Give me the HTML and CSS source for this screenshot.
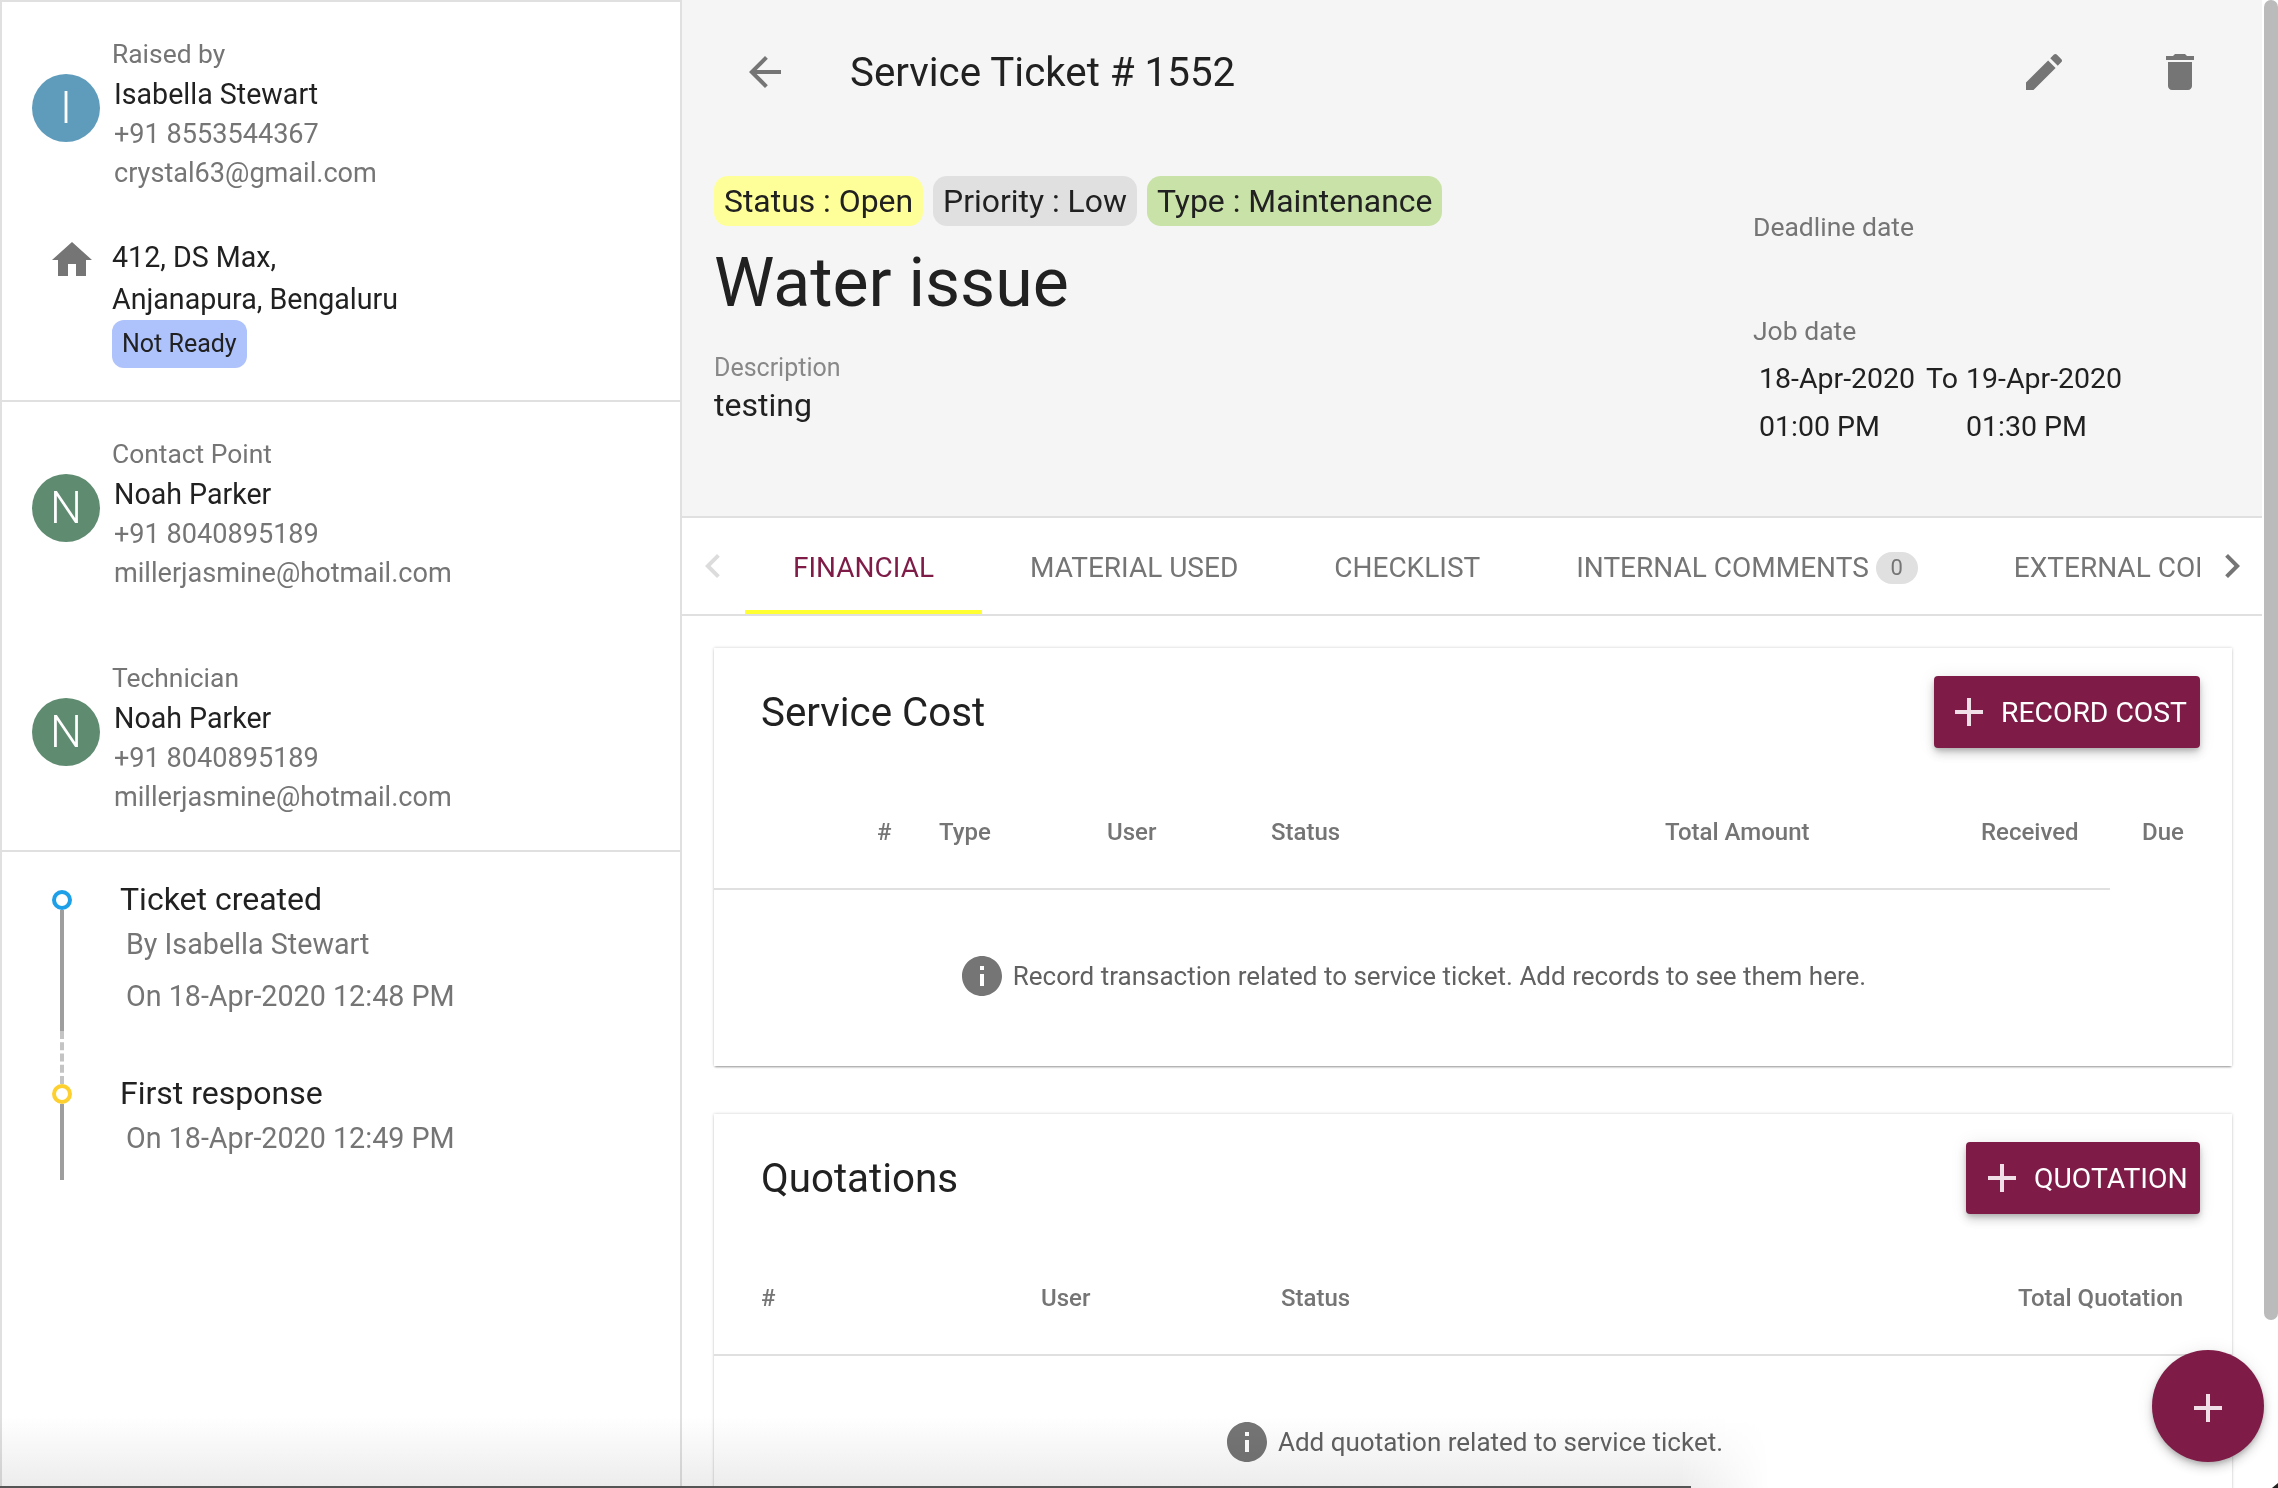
FILE: index.html
```html
<!DOCTYPE html>
<html>
<head>
  <title>Service Ticket # 1552</title>
  <link rel="stylesheet" href="styles.css">
</head>
<body>
  <div class="app">
    <aside class="side">
      <section class="side-block block-raised">
        <div class="person">
          <div class="avatar avatar-blue">I</div>
          <div class="person-info">
            <div class="label">Raised by</div>
            <div class="name">Isabella Stewart</div>
            <div class="meta">+91 8553544367</div>
            <div class="meta">crystal63@gmail.com</div>
          </div>
        </div>
        <div class="address">
          <svg class="home-icon" viewBox="0 0 24 24"><path d="M10 20v-6h4v6h5v-8h3L12 3 2 12h3v8z"/></svg>
          <div>
            <div class="address-line">412, DS Max,</div>
            <div class="address-line">Anjanapura, Bengaluru</div>
            <span class="ready-chip">Not Ready</span>
          </div>
        </div>
      </section>

      <section class="side-block block-people">
        <div class="person">
          <div class="avatar avatar-green">N</div>
          <div class="person-info">
            <div class="label">Contact Point</div>
            <div class="name">Noah Parker</div>
            <div class="meta">+91 8040895189</div>
            <div class="meta">millerjasmine@hotmail.com</div>
          </div>
        </div>
        <div class="person person-second">
          <div class="avatar avatar-green">N</div>
          <div class="person-info">
            <div class="label">Technician</div>
            <div class="name">Noah Parker</div>
            <div class="meta">+91 8040895189</div>
            <div class="meta">millerjasmine@hotmail.com</div>
          </div>
        </div>
      </section>

      <section class="timeline">
        <div class="step step-first">
          <div class="rail">
            <span class="dot dot-blue"></span>
            <span class="rail-solid rail-long"></span>
            <span class="rail-dashed"></span>
          </div>
          <div class="step-body">
            <div class="step-title">Ticket created</div>
            <div class="step-meta">By Isabella Stewart</div>
            <div class="step-meta step-date">On 18-Apr-2020 12:48 PM</div>
          </div>
        </div>
        <div class="step">
          <div class="rail">
            <span class="dot dot-yellow"></span>
            <span class="rail-solid rail-short"></span>
          </div>
          <div class="step-body">
            <div class="step-title">First response</div>
            <div class="step-meta">On 18-Apr-2020 12:49 PM</div>
          </div>
        </div>
      </section>
    </aside>

    <main class="main">
      <header class="ticket-head">
        <div class="topbar">
          <svg class="icon back-icon" viewBox="0 0 24 24"><path d="M20 11H7.83l5.59-5.59L12 4l-8 8 8 8 1.41-1.41L7.83 13H20v-2z"/></svg>
          <h1 class="ticket-no">Service Ticket # 1552</h1>
          <svg class="icon edit-icon" viewBox="0 0 24 24"><path d="M3 17.25V21h3.75L17.81 9.94l-3.75-3.75L3 17.25zM20.71 7.04c.39-.39.39-1.02 0-1.41l-2.34-2.34c-.39-.39-1.02-.39-1.41 0l-1.83 1.83 3.75 3.75 1.83-1.83z"/></svg>
          <svg class="icon trash-icon" viewBox="0 0 24 24"><path d="M6 19c0 1.1.9 2 2 2h8c1.100 0 2-.9 2-2V7H6v12zM19 4h-3.500l-1-1h-5l-1 1H5v2h14V4z"/></svg>
        </div>
        <div class="head-columns">
          <div class="head-left">
            <div class="chips">
              <span class="chip chip-yellow">Status : Open</span>
              <span class="chip chip-grey">Priority : Low</span>
              <span class="chip chip-green">Type : Maintenance</span>
            </div>
            <div class="issue">Water issue</div>
            <div class="desc-label">Description</div>
            <div class="desc-text">testing</div>
          </div>
          <div class="head-right">
            <div class="date-label">Deadline date</div>
            <div class="date-label job-label">Job date</div>
            <div class="job-dates">
              <span>18-Apr-2020</span><span>To</span><span>19-Apr-2020</span>
              <span>01:00 PM</span><span></span><span>01:30 PM</span>
            </div>
          </div>
        </div>
      </header>

      <nav class="tabs">
        <svg class="tab-arrow arrow-off" viewBox="0 0 24 24"><path d="M15.41 7.41 14 6l-6 6 6 6 1.410-1.410L10.830 12z"/></svg>
        <div class="tab-list">
          <a class="tab tab-active">FINANCIAL</a>
          <a class="tab">MATERIAL USED</a>
          <a class="tab">CHECKLIST</a>
          <a class="tab">INTERNAL COMMENTS <span class="tab-count">0</span></a>
          <a class="tab">EXTERNAL COMMENTS</a>
        </div>
        <svg class="tab-arrow arrow-next" viewBox="0 0 24 24"><path d="M10 6 8.590 7.410 13.170 12l-4.580 4.590L10 18l6-6z"/></svg>
      </nav>

      <div class="content">
        <section class="card card-cost">
          <div class="card-head">
            <h2 class="card-title">Service Cost</h2>
            <button class="btn btn-cost"><svg class="plus" viewBox="0 0 24 24"><path d="M19 13h-6v6h-2v-6H5v-2h6V5h2v6h6v2z"/></svg>RECORD COST</button>
          </div>
          <div class="cols cols-cost">
            <span>#</span><span>Type</span><span>User</span><span>Status</span><span>Total Amount</span><span>Received</span><span>Due</span>
          </div>
          <div class="cost-line"></div>
          <div class="empty empty-cost">
            <svg class="info" viewBox="0 0 24 24"><path d="M12 2C6.480 2 2 6.480 2 12s4.480 10 10 10 10-4.480 10-10S17.520 2 12 2zm1 15h-2v-6h2v6zm0-8h-2V7h2v2z"/></svg>
            Record transaction related to service ticket. Add records to see them here.
          </div>
        </section>

        <section class="card card-quote">
          <div class="card-head">
            <h2 class="card-title">Quotations</h2>
            <button class="btn btn-quote"><svg class="plus" viewBox="0 0 24 24"><path d="M19 13h-6v6h-2v-6H5v-2h6V5h2v6h6v2z"/></svg>QUOTATION</button>
          </div>
          <div class="cols cols-quote">
            <span>#</span><span>User</span><span>Status</span><span>Total Quotation</span>
          </div>
          <div class="empty">
            <svg class="info" viewBox="0 0 24 24"><path d="M12 2C6.480 2 2 6.480 2 12s4.480 10 10 10 10-4.480 10-10S17.520 2 12 2zm1 15h-2v-6h2v6zm0-8h-2V7h2v2z"/></svg>
            Add quotation related to service ticket.
          </div>
        </section>
      </div>
    </main>

    <div class="scrollbar"><div class="thumb"></div></div>
  </div>

  <button class="fab"><svg viewBox="0 0 24 24"><path d="M19 13h-6v6h-2v-6H5v-2h6V5h2v6h6v2z"/></svg></button>
  <div class="bottom-fade"></div>
  <div class="bottom-line"></div>
  <div class="corner"></div>
</body>
</html>
```

FILE: styles.css
```css
html, body {
  margin: 0;
  height: 100%;
  overflow: hidden;
  background-color: #fff;
}
body {
  font-family: Roboto, "Liberation Sans", sans-serif;
  color: #212121;
}
.app {
  display: flex;
  height: 1488px;
}

/* left column */
.side {
  width: 682px;
  box-sizing: border-box;
  border-top: 2px solid #e0e0e0;
  border-left: 2px solid #e0e0e0;
  border-right: 2px solid #e0e0e0;
  flex-shrink: 0;
}
.side-block {
  border-bottom: 2px solid #e0e0e0;
  box-sizing: border-box;
}
.block-raised {
  height: 400px;
  padding: 32px 0 0 30px;
}
.block-people {
  height: 450px;
  padding: 32px 0 0 30px;
}
.person {
  display: flex;
  align-items: flex-start;
}
.person-second {
  margin-top: 64.5px;
}
.avatar {
  width: 68px;
  height: 68px;
  border-radius: 50%;
  color: #fff;
  font-size: 45px;
  font-weight: 300;
  line-height: 68px;
  text-align: center;
  flex-shrink: 0;
  margin-right: 14px;
  margin-top: 40px;
}
.avatar-blue {
  background-color: #5f9cbc;
}
.avatar-green {
  background-color: #5f8b70;
}
.label {
  font-size: 26.4px;
  line-height: 41px;
  color: #757575;
  margin-left: -2px;
}
.name {
  font-size: 28.6px;
  line-height: 39.5px;
}
.meta {
  font-size: 27.1px;
  line-height: 39.5px;
  color: #757575;
}
.address {
  display: flex;
  margin-top: 42.5px;
}
.home-icon {
  width: 48px;
  height: 48px;
  fill: #757575;
  margin-left: 16px;
  margin-right: 16px;
  flex-shrink: 0;
}
.address-line {
  font-size: 28.6px;
  line-height: 42px;
}
.ready-chip {
  display: inline-block;
  background-color: #aec2fb;
  border-radius: 12px;
  font-size: 25px;
  line-height: 48px;
  padding: 0 10px;
}

/* timeline */
.timeline {
  padding: 38px 0 0 50px;
}
.step {
  display: flex;
}
.step-first {
  height: 194px;
}
.rail {
  width: 20px;
  display: flex;
  flex-direction: column;
  align-items: center;
  margin-right: 48px;
}
.dot {
  width: 20px;
  height: 20px;
  box-sizing: border-box;
  border-radius: 50%;
  border: 4px solid;
  background-color: #fff;
  flex-shrink: 0;
}
.dot-blue {
  border-color: #1ea0e8;
}
.dot-yellow {
  border-color: #fdd02f;
}
.rail-solid {
  width: 4px;
  background-color: #9e9e9e;
}
.rail-long {
  height: 121px;
}
.rail-short {
  height: 76px;
}
.rail-dashed {
  width: 0;
  height: 53px;
  border-left: 4px dashed #c4c4c4;
}
.step-title {
  font-size: 32px;
  line-height: 40px;
  margin-top: -11px;
}
.step-meta {
  font-size: 28.7px;
  line-height: 38px;
  color: #757575;
  margin-left: 6px;
  margin-top: 6px;
}
.step-date {
  margin-top: 14px;
}

/* right column */
.main {
  flex: 1;
  min-width: 0;
  overflow: hidden;
}
.ticket-head {
  height: 518px;
  box-sizing: border-box;
  background-color: #f5f5f5;
  border-bottom: 2px solid #e0e0e0;
  padding: 48px 0 0 32px;
}
.topbar {
  display: flex;
  align-items: center;
  height: 48px;
}
.icon {
  width: 48px;
  height: 48px;
  fill: #757575;
  flex-shrink: 0;
}
.back-icon {
  margin-left: 27px;
}
.ticket-no {
  margin: 0 0 0 61px;
  font-size: 40.3px;
  font-weight: 400;
  flex: 1;
}
.edit-icon {
  margin-right: 88px;
}
.trash-icon {
  margin-right: 58px;
}
.head-columns {
  display: flex;
  margin-top: 80px;
}
.head-left {
  width: 1039px;
}
.chips {
  display: flex;
  gap: 10px;
}
.chip {
  height: 50px;
  line-height: 50px;
  padding: 0 10px;
  border-radius: 14px;
  font-size: 31.9px;
}
.chip-yellow {
  background-color: #ffff99;
}
.chip-grey {
  background-color: #e0e0e0;
}
.chip-green {
  background-color: #c8e2a8;
}
.issue {
  font-size: 68px;
  line-height: 80px;
  margin-top: 17px;
}
.desc-label {
  font-size: 25px;
  line-height: 32px;
  color: #888;
  margin-top: 29px;
}
.desc-text {
  font-size: 32px;
  line-height: 40px;
  margin-top: 1px;
}
.head-right {
  padding-top: 32px;
}
.date-label {
  font-size: 26.5px;
  line-height: 38px;
  color: #757575;
}
.job-label {
  margin-top: 66px;
}
.job-dates {
  display: grid;
  grid-template-columns: 167px 40px auto;
  row-gap: 8px;
  margin: 9px 0 0 6px;
  font-size: 28.5px;
  line-height: 40px;
}

/* tabs */
.tabs {
  height: 98px;
  box-sizing: border-box;
  border-bottom: 2px solid #e0e0e0;
  display: flex;
}
.tab-arrow {
  width: 48px;
  height: 48px;
  fill: #757575;
  flex-shrink: 0;
  margin-top: 24px;
}
.arrow-off {
  fill: #dcdcdc;
  margin-left: 7px;
  margin-right: 8px;
}
.arrow-next {
  margin-left: 8px;
}
.tab-list {
  display: flex;
  width: 1455px;
  overflow: hidden;
  flex-shrink: 0;
}
.tab {
  padding: 2px 48px 0;
  height: 96px;
  box-sizing: border-box;
  font-size: 28px;
  color: #757575;
  white-space: nowrap;
  flex-shrink: 0;
  display: flex;
  align-items: center;
}
.tab-active {
  color: #7e1c47;
  border-bottom: 4px solid #ffff33;
  padding-top: 6px;
}
.tab-count {
  display: inline-block;
  background-color: #e0e0e0;
  border-radius: 16px;
  font-size: 22px;
  width: 42px;
  height: 32px;
  line-height: 32px;
  text-align: center;
  margin-left: 7px;
  margin-top: 2px;
}

/* cards */
.content {
  padding: 32px 30px 0 32px;
  width: 1518px;
}
.card {
  background-color: #fff;
  box-shadow: 0 2px 2px -1px rgba(0, 0, 0, 0.35), 0 0 3px rgba(0, 0, 0, 0.2);
  box-sizing: border-box;
  padding-top: 28px;
}
.card-cost {
  height: 418px;
}
.card-quote {
  margin-top: 48px;
  height: 420px;
}
.card-head {
  display: flex;
  align-items: center;
  justify-content: space-between;
  padding: 0 32px 0 47px;
  height: 72px;
}
.card-title {
  margin: 0;
  font-size: 40.3px;
  font-weight: 400;
}
.btn {
  display: flex;
  align-items: center;
  height: 72px;
  border: none;
  border-radius: 4px;
  background-color: #7e1c47;
  color: #fff;
  font-family: inherit;
  font-size: 28.3px;
  padding: 0;
  box-shadow: 0 3px 5px -1px rgba(0, 0, 0, 0.2), 0 6px 10px 0 rgba(0, 0, 0, 0.14), 0 1px 18px 0 rgba(0, 0, 0, 0.08);
}
.btn-cost {
  width: 266px;
}
.btn-quote {
  width: 234px;
}
.plus {
  width: 48px;
  height: 48px;
  fill: #f0dfe7;
  margin-left: 11px;
  margin-right: 8px;
}
.btn-quote .plus {
  margin-left: 12px;
}
.cols {
  display: flex;
  font-size: 24px;
  font-weight: 500;
  color: #757575;
}
.cols-cost {
  height: 60px;
  align-items: center;
  margin-top: 54px;
  padding-left: 163px;
}
.cols-cost span:nth-child(1) { width: 62px; }
.cols-cost span:nth-child(2) { width: 168px; }
.cols-cost span:nth-child(3) { width: 164px; }
.cols-cost span:nth-child(4) { width: 394px; }
.cols-cost span:nth-child(5) { width: 316px; }
.cols-cost span:nth-child(6) { width: 161px; }
.cost-line {
  height: 2px;
  width: 1396px;
  margin-top: 26px;
  background-color: #e0e0e0;
}
.cols-quote {
  box-sizing: border-box;
  height: 142px;
  padding: 69px 0 0 47px;
  line-height: 30px;
  border-bottom: 2px solid #e0e0e0;
}
.cols-quote span:nth-child(1) { width: 280px; }
.cols-quote span:nth-child(2) { width: 240px; }
.cols-quote span:nth-child(3) { width: 737px; }
.empty {
  display: flex;
  align-items: center;
  justify-content: center;
  font-size: 26px;
  color: #616161;
  margin-top: 62px;
  gap: 7px;
}
.empty-cost {
  width: 1396px;
}
.info {
  width: 48px;
  height: 48px;
  fill: #757575;
}

/* page level overlays */
.scrollbar {
  width: 14px;
  flex-shrink: 0;
  background-color: #fff;
  margin-left: 2px;
}
.thumb {
  height: 1320px;
  background-color: #bbb;
  border-radius: 7px;
}
.fab {
  position: absolute;
  left: 2152px;
  top: 1350px;
  width: 112px;
  height: 112px;
  border: none;
  border-radius: 50%;
  padding: 0;
  background-color: #7e1c47;
  box-shadow: 0 3px 5px -1px rgba(0, 0, 0, 0.2), 0 6px 10px 0 rgba(0, 0, 0, 0.14), 0 1px 18px 0 rgba(0, 0, 0, 0.08);
}
.fab svg {
  width: 48px;
  height: 48px;
  fill: #f0dfe7;
  display: block;
  margin: 4px auto 0;
}
.bottom-fade {
  position: absolute;
  left: 0;
  bottom: 0;
  width: 1770px;
  height: 72px;
  background: linear-gradient(to bottom, #fff, #ececec);
  mix-blend-mode: multiply;
  -webkit-mask-image: linear-gradient(to right, #000 1680px, transparent 1770px);
  mask-image: linear-gradient(to right, #000 1680px, transparent 1770px);
  pointer-events: none;
}
.bottom-line {
  position: absolute;
  left: 0;
  bottom: 0;
  width: 1691px;
  height: 2px;
  background-color: #555;
}
.corner {
  position: absolute;
  right: 0;
  bottom: 0;
  width: 6px;
  height: 5px;
  background-color: #222;
  clip-path: polygon(100% 0, 100% 100%, 0 100%);
}
```
